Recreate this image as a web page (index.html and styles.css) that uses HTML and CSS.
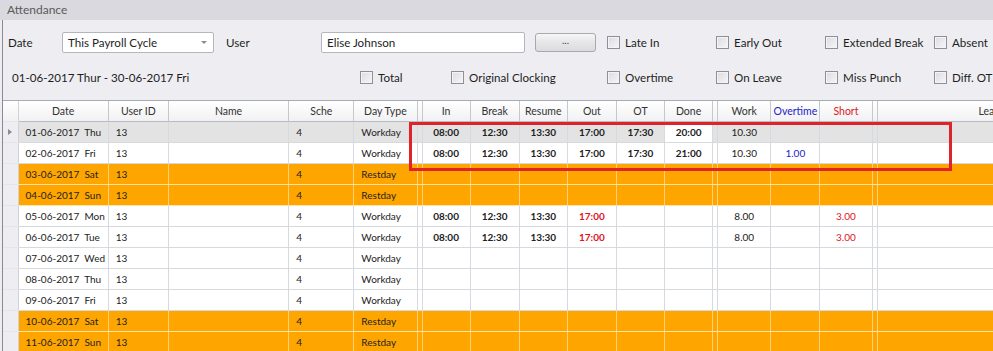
FILE: index.html
```html
<!DOCTYPE html>
<html lang="en">
<head>
    <meta charset="UTF-8">
    <title>Attendance</title>
    <link rel="stylesheet" href="styles.css">
</head>
<body>
    <div class="window">
        <div class="titlebar">Attendance</div>
        <div class="panel">
            <div class="filters">
                <div class="frow">
                    <span class="lbl w-54">Date</span>
                    <div class="select w-152">This Payroll Cycle<span class="caret"></span></div>
                    <span class="lbl w-95 ml-12">User</span>
                    <div class="input w-204">Elise Johnson</div>
                    <div class="btn">...</div>
                    <label class="chk w-109"><span class="box"></span>Late In</label>
                    <label class="chk w-109"><span class="box"></span>Early Out</label>
                    <label class="chk w-109"><span class="box"></span>Extended Break</label>
                    <label class="chk w-109"><span class="box"></span>Absent</label>
                </div>
                <div class="frow">
                    <span class="lbl range">01-06-2017 Thur - 30-06-2017 Fri</span>
                    <label class="chk w-91"><span class="box"></span>Total</label>
                    <label class="chk w-156"><span class="box"></span>Original Clocking</label>
                    <label class="chk w-109"><span class="box"></span>Overtime</label>
                    <label class="chk w-109"><span class="box"></span>On Leave</label>
                    <label class="chk w-109"><span class="box"></span>Miss Punch</label>
                    <label class="chk w-109"><span class="box"></span>Diff. OT</label>
                </div>
            </div>

            <div class="grid-wrap">
                <table class="grid">
                    <colgroup>
                        <col style="width:15px"><col style="width:90px"><col style="width:60px"><col style="width:120px">
                        <col style="width:65px"><col style="width:63px"><col style="width:5px">
                        <col style="width:48px"><col style="width:49px"><col style="width:48px"><col style="width:49px">
                        <col style="width:48px"><col style="width:48px"><col style="width:5px">
                        <col style="width:53px"><col style="width:49px"><col style="width:52px"><col style="width:5px">
                        <col style="width:120px">
                    </colgroup>
                    <thead>
                        <tr>
                            <th class="rh"></th><th>Date</th><th>User ID</th><th>Name</th><th>Sche</th><th>Day Type</th><th class="sp"></th>
                            <th>In</th><th>Break</th><th>Resume</th><th>Out</th><th>OT</th><th>Done</th><th class="sp"></th>
                            <th>Work</th><th class="blue">Overtime</th><th class="red">Short</th><th class="sp"></th><th class="lea">Leave</th>
                        </tr>
                    </thead>
                    <tbody>
                        <tr class="sel">
                            <td class="rh"><span class="arrow"></span></td><td class="pl">01-06-2017&nbsp; Thu</td><td class="pl">13</td><td></td><td class="pl">4</td><td class="pl">Workday</td><td class="sp"></td>
                            <td class="t">08:00</td><td class="t">12:30</td><td class="t">13:30</td><td class="t">17:00</td><td class="t">17:30</td><td class="t done">20:00</td><td class="sp"></td>
                            <td class="c">10.30</td><td></td><td></td><td class="sp"></td><td></td>
                        </tr>
                        <tr>
                            <td class="rh"></td><td class="pl">02-06-2017&nbsp; Fri</td><td class="pl">13</td><td></td><td class="pl">4</td><td class="pl">Workday</td><td class="sp"></td>
                            <td class="t">08:00</td><td class="t">12:30</td><td class="t">13:30</td><td class="t">17:00</td><td class="t">17:30</td><td class="t">21:00</td><td class="sp"></td>
                            <td class="c">10.30</td><td class="c blue">1.00</td><td></td><td class="sp"></td><td></td>
                        </tr>
                        <tr class="rest">
                            <td class="rh"></td><td class="pl">03-06-2017&nbsp; Sat</td><td class="pl">13</td><td></td><td class="pl">4</td><td class="pl">Restday</td><td class="sp"></td>
                            <td></td><td></td><td></td><td></td><td></td><td></td><td class="sp"></td><td></td><td></td><td></td><td class="sp"></td><td></td>
                        </tr>
                        <tr class="rest">
                            <td class="rh"></td><td class="pl">04-06-2017&nbsp; Sun</td><td class="pl">13</td><td></td><td class="pl">4</td><td class="pl">Restday</td><td class="sp"></td>
                            <td></td><td></td><td></td><td></td><td></td><td></td><td class="sp"></td><td></td><td></td><td></td><td class="sp"></td><td></td>
                        </tr>
                        <tr>
                            <td class="rh"></td><td class="pl">05-06-2017&nbsp; Mon</td><td class="pl">13</td><td></td><td class="pl">4</td><td class="pl">Workday</td><td class="sp"></td>
                            <td class="t">08:00</td><td class="t">12:30</td><td class="t">13:30</td><td class="t red">17:00</td><td></td><td></td><td class="sp"></td>
                            <td class="c">8.00</td><td></td><td class="c red">3.00</td><td class="sp"></td><td></td>
                        </tr>
                        <tr>
                            <td class="rh"></td><td class="pl">06-06-2017&nbsp; Tue</td><td class="pl">13</td><td></td><td class="pl">4</td><td class="pl">Workday</td><td class="sp"></td>
                            <td class="t">08:00</td><td class="t">12:30</td><td class="t">13:30</td><td class="t red">17:00</td><td></td><td></td><td class="sp"></td>
                            <td class="c">8.00</td><td></td><td class="c red">3.00</td><td class="sp"></td><td></td>
                        </tr>
                        <tr>
                            <td class="rh"></td><td class="pl">07-06-2017&nbsp; Wed</td><td class="pl">13</td><td></td><td class="pl">4</td><td class="pl">Workday</td><td class="sp"></td>
                            <td></td><td></td><td></td><td></td><td></td><td></td><td class="sp"></td><td></td><td></td><td></td><td class="sp"></td><td></td>
                        </tr>
                        <tr>
                            <td class="rh"></td><td class="pl">08-06-2017&nbsp; Thu</td><td class="pl">13</td><td></td><td class="pl">4</td><td class="pl">Workday</td><td class="sp"></td>
                            <td></td><td></td><td></td><td></td><td></td><td></td><td class="sp"></td><td></td><td></td><td></td><td class="sp"></td><td></td>
                        </tr>
                        <tr>
                            <td class="rh"></td><td class="pl">09-06-2017&nbsp; Fri</td><td class="pl">13</td><td></td><td class="pl">4</td><td class="pl">Workday</td><td class="sp"></td>
                            <td></td><td></td><td></td><td></td><td></td><td></td><td class="sp"></td><td></td><td></td><td></td><td class="sp"></td><td></td>
                        </tr>
                        <tr class="rest">
                            <td class="rh"></td><td class="pl">10-06-2017&nbsp; Sat</td><td class="pl">13</td><td></td><td class="pl">4</td><td class="pl">Restday</td><td class="sp"></td>
                            <td></td><td></td><td></td><td></td><td></td><td></td><td class="sp"></td><td></td><td></td><td></td><td class="sp"></td><td></td>
                        </tr>
                        <tr class="rest">
                            <td class="rh"></td><td class="pl">11-06-2017&nbsp; Sun</td><td class="pl">13</td><td></td><td class="pl">4</td><td class="pl">Restday</td><td class="sp"></td>
                            <td></td><td></td><td></td><td></td><td></td><td></td><td class="sp"></td><td></td><td></td><td></td><td class="sp"></td><td></td>
                        </tr>
                    </tbody>
                </table>
                <div class="highlight"></div>
            </div>
        </div>
    </div>
</body>
</html>
```

FILE: styles.css
```css
*{
    box-sizing: border-box;
}
html, body{
    margin: 0;
    height: 100%;
    overflow: hidden;
    background: #eeeef2;
}
body{
    font-family: Lato, "Open Sans", sans-serif;
    font-size: 11.6px;
    color: #1e1e1e;
}
.window{
    width: 993px;
    height: 351px;
    overflow: hidden;
}
.titlebar{
    height: 20px;
    line-height: 20px;
    padding-left: 7px;
    background: #d9d9df;
    color: #5a5a5a;
    font-size: 12px;
}
.panel{
    margin-left: 2px;
    border-left: 1px solid #8a8a96;
    height: 331px;
}
.filters{
    padding-top: 12px;
}
.frow{
    display: flex;
    align-items: center;
    height: 21px;
    padding-left: 5px;
}
.frow + .frow{
    margin-top: 14px;
    padding-left: 9px;
}
.lbl{
    flex: none;
}
.range{
    width: 348px;
}
.w-54{ width: 54px; }
.w-95{ width: 95px; }
.w-91{ width: 91px; }
.w-109{ width: 109px; }
.w-152{ width: 152px; }
.w-156{ width: 156px; }
.w-204{ width: 204px; }
.ml-12{ margin-left: 12px; }
.select, .input{
    flex: none;
    height: 21px;
    line-height: 19px;
    padding-left: 5px;
    background: #fff;
    border: 1px solid #b4b6bd;
    border-radius: 2px;
    position: relative;
}
.caret{
    position: absolute;
    right: 6px;
    top: 8px;
    border-left: 3px solid transparent;
    border-right: 3px solid transparent;
    border-top: 3px solid #8c8c8c;
}
.btn{
    flex: none;
    width: 61px;
    height: 19px;
    margin-left: 10px;
    margin-right: 11px;
    border: 1px solid #a8a8ae;
    border-radius: 3px;
    background: linear-gradient(#f6f6f7, #e6e6e9 50%, #dcdcdf);
    text-align: center;
    line-height: 13px;
    font-size: 10px;
    color: #444;
}
.chk{
    flex: none;
    display: flex;
    align-items: center;
    white-space: nowrap;
}
.box{
    flex: none;
    width: 13px;
    height: 13px;
    margin-right: 5px;
    border: 1px solid #8e8f99;
    background: linear-gradient(135deg, #dcdcdf, #f6f6f7);
    box-shadow: inset 0 0 0 1px #f4f4f6;
}
.grid-wrap{
    position: relative;
    margin-top: 12px;
    border-top: 1px solid #a8abb3;
}
.grid{
    table-layout: fixed;
    border-collapse: collapse;
    width: 995px;
    font-size: 10px;
}
.grid th{
    height: 20px;
    padding: 0;
    font-weight: normal;
    font-size: 10.5px;
    color: #333;
    background: linear-gradient(#ffffff, #f1f1f3);
    border-right: 1px solid #c6c8ce;
    border-bottom: 1px solid #b9bcc3;
    white-space: nowrap;
    overflow: hidden;
}
.grid th.lea{
    text-align: left;
    padding-left: 101px;
}
.grid td{
    height: 21px;
    padding: 0;
    background: #fff;
    border-right: 1px solid #d6d9de;
    border-bottom: 1px solid #d6d9de;
    color: #222;
    white-space: nowrap;
    overflow: hidden;
}
.grid .rh{
    background: #eeeef2;
    border-right: 1px solid #d0d2d8;
    border-bottom-color: #e4e4ea;
    position: relative;
}
.grid th.rh{
    background: linear-gradient(#ffffff, #f1f1f3);
}
.arrow{
    position: absolute;
    left: 5px;
    top: 7px;
    border-top: 3px solid transparent;
    border-bottom: 3px solid transparent;
    border-left: 4px solid #8a8a90;
}
.pl{
    padding-left: 7px !important;
}
.t{
    text-align: center;
    font-weight: bold;
    color: #111;
}
.c{
    text-align: center;
}
.blue{
    color: #2222cc !important;
}
.red{
    color: #e0141e !important;
}
.grid tr.sel td{
    background: #e3e3e3;
}
.grid tr.sel td.rh{
    background: #eeeef2;
}
.grid tr.sel td.done{
    background: #fff;
}
.grid tr.rest td{
    background: #ffa500;
    border-right-color: #ffd27a;
    border-bottom-color: #ffe2a8;
}
.grid tr.rest td.rh{
    background: #eeeef2;
    border-right-color: #d0d2d8;
    border-bottom-color: #e4e4ea;
}
.highlight{
    position: absolute;
    left: 406px;
    top: 21px;
    width: 543px;
    height: 49px;
    border: 3px solid #e0232b;
}
```
